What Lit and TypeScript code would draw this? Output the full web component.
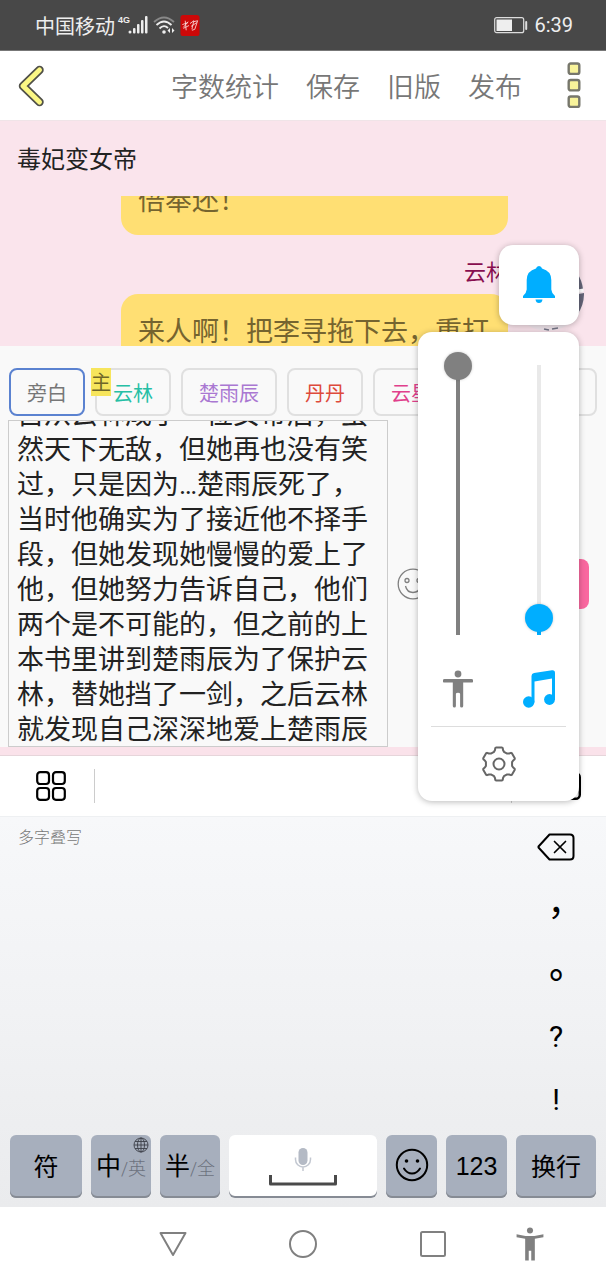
import { LitElement, html, css, svg } from "lit";
import { customElement, property, query } from "lit/decorators.js";
import { classMap } from "lit/directives/class-map.js";

const STORY =
  "自从云林成了一位女帝后，虽然天下无敌，但她再也没有笑过，只是因为…楚雨辰死了，当时他确实为了接近他不择手段，但她发现她慢慢的爱上了他，但她努力告诉自己，他们两个是不可能的，但之前的上本书里讲到楚雨辰为了保护云林，替她挡了一剑，之后云林就发现自己深深地爱上楚雨辰";

const ROLES = [
  { name: "旁白", tone: "grey", active: true, lead: false },
  { name: "云林", tone: "teal", active: false, lead: true },
  { name: "楚雨辰", tone: "purple", active: false, lead: false },
  { name: "丹丹", tone: "red", active: false, lead: false },
  { name: "云星", tone: "pink", active: false, lead: false },
];

/** Outline of a six-toothed cog centred on 18,18. */
function cog(): string {
  const pts: string[] = [];
  for (let i = 0; i < 6; i++) {
    const mid = -90 + i * 60;
    for (const [off, r] of [[-22, 13.2], [-16, 14.6], [-13, 16.4], [-10, 16.8], [10, 16.8], [13, 16.4], [16, 14.6], [22, 13.2]]) {
      const a = ((mid + off) * Math.PI) / 180;
      pts.push(`${(18 + r * Math.cos(a)).toFixed(2)} ${(18 + r * Math.sin(a)).toFixed(2)}`);
    }
  }
  return `M${pts.join("L")}Z`;
}

@customElement("volume-slider")
export class VolumeSlider extends LitElement {
  @property() label = "";
  @property({ type: Number }) value = 0;
  @property({ reflect: true }) tone = "grey";

  static styles = css`
    :host { display: block; --on: #808080; --off: #e9e9e9; }
    :host([tone="blue"]) { --on: #00aeff; }
    input {
      display: block;
      appearance: none;
      -webkit-appearance: none;
      writing-mode: vertical-lr;
      direction: rtl;
      width: 28px;
      height: 296px;
      margin: 0;
      background: linear-gradient(to top, var(--on) var(--fill), var(--off) var(--fill)) center / 4px 270px no-repeat;
    }
    input::-webkit-slider-thumb {
      appearance: none;
      -webkit-appearance: none;
      width: 28px;
      height: 28px;
      border-radius: 50%;
      background: var(--on);
      box-shadow: 0 0 3px rgb(0 0 0 / 20%);
    }
  `;

  render() {
    return html`<input type="range" min="0" max="100" aria-label=${this.label}
      .value=${String(this.value)} style="--fill:${this.value}%" />`;
  }
}

@customElement("app-root")
export class AppRoot extends LitElement {
  @query(".feed") feed!: HTMLElement;
  @query(".story") story!: HTMLTextAreaElement;

  firstUpdated() {
    this.feed.scrollTop = 33;
    this.story.scrollTop = this.story.scrollHeight - this.story.clientHeight - 2;
  }

  static styles = css`
    :host {
      display: flex;
      flex-direction: column;
      position: relative;
      min-height: 100vh;
      overflow: hidden;
      background: #fff;
      font-family: Roboto, "Noto Sans CJK SC", sans-serif;
    }
    * { box-sizing: border-box; }
    button {
      font: inherit;
      color: inherit;
      background: none;
      border: 0;
      padding: 0;
      margin: 0;
      display: flex;
      align-items: center;
      justify-content: center;
    }
    svg { display: block; flex: none; }

    .status {
      display: flex;
      align-items: center;
      height: 51px;
      padding: 0 33px 0 35px;
      background: #484848;
      border-bottom: 1px solid #777;
      color: #eee;
      font-size: 20px;
    }
    .network { margin-left: 3px; width: 10px; align-self: flex-start; padding-top: 14px; font: 700 9px/12px "Liberation Sans", sans-serif; }
    .radio { display: flex; gap: 5px; align-items: center; flex: 1; }
    .status-right { display: flex; gap: 6px; align-items: center; }

    .header {
      display: flex;
      align-items: center;
      height: 70px;
      padding: 0 24px 0 17px;
      border-bottom: 1px solid #f0e4e8;
      color: #777;
      font-size: 27px;
      font-weight: 350;
    }
    .actions { display: flex; flex: 1; justify-content: flex-end; gap: 27px; padding-right: 44px; }

    .title {
      height: 75px;
      margin: 0;
      padding: 2px 17px 0;
      background: #fae4ec;
      color: #222;
      font-size: 24px;
      font-weight: 400;
      line-height: 75px;
    }
    .feed { height: 150px; overflow: hidden; background: #fae4ec; padding: 0 22px 0 121px; }
    .row { display: grid; grid-template-columns: minmax(0, 1fr) 76px; align-items: start; }
    .bubble {
      grid-column: 1;
      padding: 20px 17px 16px;
      margin: 0;
      border-radius: 17px;
      background: #ffdf73;
      color: #75642f;
      font-size: 27px;
      line-height: 36px;
      white-space: nowrap;
    }
    .speaker { grid-column: 1; text-align: right; color: #880e4f; font-size: 22px; line-height: 32px; padding-top: 22px; margin-bottom: 5px; }
    .avatar { grid-column: 2; grid-row: 1 / span 2; margin-top: 23px; margin-left: 3px; }

    .roles { display: flex; gap: 10px; padding: 22px 9px 4px; height: 74px; background: #f9f9f9; font-size: 20px; }
    .role {
      position: relative;
      height: 48px;
      padding: 0 16px;
      border: 2px solid #e0e0e0;
      border-radius: 8px;
      white-space: nowrap;
    }
    .role.active { border-color: #5b82d0; }
    .role.more { flex: 1; }
    .grey { color: #777; }
    .teal { color: #26bfa5; }
    .purple { color: #aa78d2; }
    .red { color: #de4a3c; }
    .pink { color: #e0408c; }
    .lead { position: absolute; left: -6px; top: -2px; width: 20px; height: 28px; background: #f7e55c; color: #6f6628; line-height: 30px; }

    .compose { display: flex; align-items: center; gap: 9px; padding: 0 17px 0 8px; background: #f9f9f9; }
    .story {
      display: block;
      flex: 0 1 380px;
      height: 327px;
      margin: 0;
      padding: 0 8px;
      border: 1px solid #ccc;
      background: transparent;
      color: #222;
      font: 400 27px/35px Roboto, "Noto Sans CJK SC", sans-serif;
      resize: none;
      overflow: hidden;
      outline: 0;
    }
    .send { margin-left: auto; width: 90px; height: 50px; border-radius: 8px; background: #f9689f; }
    .strip { height: 9px; background: #fae2ea; border-bottom: 1px solid #e6d5da; }

    .tools { display: flex; align-items: center; height: 60px; padding: 0 25px 0 36px; background: #fff; }
    .rule { width: 1px; height: 34px; background: #ccc; }
    .tools .rule:first-of-type { margin-left: 28px; }
    .tools .last { margin-left: auto; margin-right: 40px; }

    .keyboard { flex: 1; display: flex; flex-direction: column; border-top: 1px solid #eef0f2; background: linear-gradient(#f7f8fa, #f1f2f4 50%, #eaebed); }
    .pad { display: flex; justify-content: space-between; flex: 1; padding: 0 10px 0 18px; }
    .hint { color: #777; font-size: 16px; line-height: 24px; padding-top: 9px; font-weight: 300; }
    .marks { display: flex; flex-direction: column; width: 80px; color: #000; font-size: 30px; }
    .marks button { height: 63px; padding-bottom: 3px; }
    .wide { font-family: "Noto Sans CJK TC", sans-serif; font-size: 36px; line-height: 54px; }
    .bold { font-weight: 500; }
    .keys { display: grid; grid-template-columns: 72fr 60fr 60fr 148fr 51fr 61fr 80fr; gap: 9px; padding: 3px 10px 9px; }
    .key {
      position: relative;
      height: 63px;
      padding-bottom: 3px;
      border-radius: 6px;
      background: #a7afbd;
      box-shadow: inset 0 -2px #868b94;
      color: #000;
      font-size: 25px;
      white-space: nowrap;
    }
    .digits { font-family: "Liberation Sans", sans-serif; padding-bottom: 0; }
    .space { flex-direction: column; gap: 3px; padding: 0; background: #fff; }
    .pair { align-items: baseline; padding-top: 11px; }
    .alt { color: #6c727d; font-size: 18px; font-weight: 300; }
    .globe { position: absolute; right: 2px; top: 2px; }

    .nav { display: grid; grid-template-columns: 108fr 130fr 130fr 130fr 64fr 44fr; height: 74px; background: #fff; }
    .nav button:first-child { grid-column: 2; }

    .overlay { position: absolute; right: 27px; top: 245px; display: flex; flex-direction: column; align-items: flex-end; gap: 7px; }
    .card { background: #fff; border-radius: 14px; box-shadow: 0 1px 6px rgb(0 0 0 / 28%); }
    .bell { width: 80px; height: 80px; }
    .panel { width: 161px; padding: 20px 13px 0; }
    .channels { display: flex; justify-content: space-between; }
    .channel { display: flex; flex-direction: column; align-items: center; width: 54px; gap: 21px; padding-bottom: 17px; }
    .settings { width: 100%; height: 75px; border-top: 1px solid #ddd; }
  `;

  private person(width: number, height: number, raised: boolean) {
    return svg`<svg width=${width} height=${height} viewBox="0 0 30 38" fill="#808080" aria-hidden="true">
      <circle cx="15" cy="4" r="3.4"/>
      ${raised
        ? svg`<path d="M0 8.2 L10 10h10L30 8.2v3.2L20.400 13V37.500h-4V26.500h-2.800V37.500h-4V13L0 11.400z"/>`
        : svg`<path d="M1.500 9h27a1.600 1.600 0 0 1 0 3.600H20.200V36q0 1.500-1.600 1.500t-1.500-1.500V24q0-1.200-2.100-1.200T12.900 24v12q0 1.500-1.500 1.500T9.800 36V12.600H1.500a1.600 1.600 0 0 1 0-3.600z"/>`}
    </svg>`;
  }

  render() {
    return html`
      <div class="status">
        <span>中国移动</span>
        <span class="network">4G</span>
        <div class="radio">
          <svg width="20" height="20" viewBox="0 0 20 20" fill="#eee" aria-hidden="true">
            <circle cx="2" cy="17" r="1.500"/><rect x="5" y="13" width="2.500" height="5.500" rx="1"/><rect x="9" y="9" width="2.500" height="9.500" rx="1"/><rect x="13" y="5" width="2.500" height="13.500" rx="1"/><rect x="17" y="1" width="2.500" height="17.500" rx="1"/>
          </svg>
          <svg width="22" height="20" viewBox="0 0 22 20" fill="none" stroke="#eee" stroke-width="1.800" aria-hidden="true">
            <path d="M1 7Q11-2 21 7" stroke="#888"/><path d="M3.500 10Q11 3 18.500 10M6.500 13.500Q11 9 15 13"/>
            <circle cx="11" cy="17" r="1.800" fill="#eee" stroke="none"/><path d="M17 13v5l-2.500-2.500zM19 13v5l2.500-2.500z" fill="#eee" stroke="none"/>
          </svg>
          <svg width="20" height="21" viewBox="0 0 20 22" aria-hidden="true">
            <rect width="20" height="22" rx="3" fill="#cc0808"/>
            <path d="M2 10l6-2M5 6l1 10M3 14l6-3M8 7l-5 6M10 9l4-3-2 9M11 12l6-4M14 7l4-1-3 9-3 1" fill="none" stroke="#f8dcdc" stroke-width=".9"/>
          </svg>
        </div>
        <div class="status-right">
          <svg width="34" height="17" viewBox="0 0 34 17" aria-hidden="true">
            <rect x=".7" y=".7" width="29" height="15" rx="2" fill="none" stroke="#ddd" stroke-width="1.200"/><rect x="2.500" y="2.500" width="15.500" height="11.500" fill="#eee"/><rect x="31.200" y="4" width="2" height="9" rx="1" fill="#ddd"/>
          </svg>
          <span>6:39</span>
        </div>
      </div>

      <header class="header">
        <button aria-label="返回">
          <svg width="28" height="42" viewBox="0 0 28 42" fill="none" stroke-linecap="round" stroke-linejoin="round" aria-hidden="true">
            <path d="M22.500 5L6 21l16.500 16" stroke="#505048" stroke-width="8.500"/><path d="M22.500 5L6 21l16.500 16" stroke="#fbf784" stroke-width="5"/>
          </svg>
        </button>
        <div class="actions">
          <button>字数统计</button><button>保存</button><button>旧版</button><button>发布</button>
        </div>
        <button aria-label="更多">
          <svg width="16" height="48" viewBox="0 0 16 48" fill="#f8f39a" stroke="#77776c" stroke-width="2.400" aria-hidden="true">
            <rect x="2.700" y="1.500" width="10.600" height="10.400" rx="2"/><rect x="2.700" y="18" width="10.600" height="10.400" rx="2"/><rect x="2.700" y="34.500" width="10.600" height="10.400" rx="2"/>
          </svg>
        </button>
      </header>

      <h1 class="title">毒妃变女帝</h1>
      <section class="feed">
        <div class="row"><p class="bubble">倍奉还！</p></div>
        <div class="row">
          <div class="speaker">云林</div>
          <svg class="avatar" width="73" height="73" viewBox="0 0 73 73" aria-hidden="true">
            <circle cx="36.500" cy="36.500" r="36.500" fill="#f1e6ed"/>
            <path d="M66 15A36 36 0 0 1 72 31L62 33zM62 37L73 35A36 36 0 0 1 66 57L60 60z" fill="#646578"/>
            <path d="M62 34L72.500 32" stroke="#fff" stroke-width="3"/>
            <path d="M33 71l5 1m3-1l6-1" stroke="#778" stroke-width="1.500"/>
          </svg>
          <p class="bubble">来人啊！把李寻拖下去，重打</p>
        </div>
      </section>

      <nav class="roles">
        ${ROLES.map(
          (r) => html`<button class=${classMap({ role: true, active: r.active, [r.tone]: true })}>
            ${r.lead ? html`<span class="lead">主</span>` : ""}${r.name}
          </button>`
        )}
        <button class="role more" aria-label="添加角色"></button>
      </nav>

      <section class="compose">
        <textarea class="story" aria-label="正文" .value=${STORY}></textarea>
        <button aria-label="表情">
          <svg width="32" height="32" viewBox="0 0 32 32" fill="none" stroke="#808080" stroke-width="1.300" aria-hidden="true">
            <circle cx="16" cy="16" r="14.800"/><circle cx="10" cy="12.500" r="2"/><circle cx="22" cy="12.500" r="2"/><path d="M8.500 18q1.500 6.500 7.500 6.500t7.500-6.500"/>
          </svg>
        </button>
        <button class="send" aria-label="发送"></button>
      </section>
      <div class="strip"></div>

      <div class="tools">
        <button aria-label="工具">
          <svg width="30" height="30" viewBox="0 0 30 30" fill="none" stroke="#000" stroke-width="2.200" aria-hidden="true">
            <rect x="1.200" y="1.200" width="11.800" height="11.800" rx="3"/><rect x="17" y="1.200" width="11.800" height="11.800" rx="3"/><rect x="1.200" y="17" width="11.800" height="11.800" rx="3"/><rect x="17" y="17" width="11.800" height="11.800" rx="3"/>
          </svg>
        </button>
        <span class="rule"></span>
        <span class="rule last"></span>
        <button aria-label="收起键盘">
          <svg width="29" height="28" viewBox="0 0 29 28" fill="none" stroke="#000" stroke-width="2.400" aria-hidden="true"><rect x="1.200" y="1.200" width="26.600" height="25.600" rx="4"/></svg>
        </button>
      </div>

      <section class="keyboard">
        <div class="pad">
          <span class="hint">多字叠写</span>
          <div class="marks">
            <button aria-label="删除">
              <svg width="38" height="28" viewBox="0 0 38 28" fill="none" stroke="#000" stroke-width="2" stroke-linejoin="round" stroke-linecap="round" aria-hidden="true">
                <path d="M12.500 1.500H33q3.500 0 3.500 3.500v18q0 3.500-3.500 3.500H12.500L1.500 14.500v-1z"/><path d="M17.500 8.500l11 11M28.500 8.500l-11 11" stroke-width="1.700"/>
              </svg>
            </button>
            <button class="wide">，</button>
            <button class="wide bold">。</button>
            <button>?</button>
            <button>!</button>
          </div>
        </div>
        <div class="keys">
          <button class="key">符</button>
          <button class="key pair"><span>中</span><span class="alt">/英</span>
            <svg class="globe" width="16" height="16" viewBox="0 0 16 16" fill="none" stroke="#3c4048" stroke-width=".9" aria-hidden="true">
              <circle cx="8" cy="8" r="7"/><ellipse cx="8" cy="8" rx="3.500" ry="7"/><path d="M8 1v14M1 8h14M2 4.500h12M2 11.500h12"/>
            </svg>
          </button>
          <button class="key pair"><span>半</span><span class="alt">/全</span></button>
          <button class="key space" aria-label="空格">
            <svg width="18" height="24" viewBox="0 0 18 24" aria-hidden="true">
              <rect x="4.500" y="0" width="9" height="17" rx="4.500" fill="#b4bac5"/><path d="M1.500 9.500v2a7.500 7.500 0 0 0 15 0v-2M9 19v4" fill="none" stroke="#c3c8d1" stroke-width="1.500"/>
            </svg>
            <svg width="68" height="11" viewBox="0 0 68 11" fill="none" stroke="#4a4a4a" stroke-width="3" stroke-linejoin="round" aria-hidden="true"><path d="M1.500 0v9h65V0"/></svg>
          </button>
          <button class="key" aria-label="表情符号">
            <svg width="34" height="34" viewBox="0 0 34 34" fill="none" stroke="#000" stroke-width="2" stroke-linecap="round" aria-hidden="true">
              <circle cx="17" cy="17" r="15.200"/><path d="M9 20.500q3 5 8 5t8-5"/><circle cx="11.500" cy="13" r="1.800" fill="#000" stroke="none"/><circle cx="22.500" cy="13" r="1.800" fill="#000" stroke="none"/>
            </svg>
          </button>
          <button class="key digits">123</button>
          <button class="key">换行</button>
        </div>
      </section>

      <nav class="nav">
        <button aria-label="返回"><svg width="28" height="26" viewBox="0 0 28 26" fill="none" stroke="#808080" stroke-width="2" stroke-linejoin="round" aria-hidden="true"><path d="M1.500 2h25L14 24z"/></svg></button>
        <button aria-label="主屏幕"><svg width="28" height="28" viewBox="0 0 28 28" fill="none" stroke="#808080" stroke-width="2" aria-hidden="true"><circle cx="14" cy="14" r="13"/></svg></button>
        <button aria-label="最近任务"><svg width="26" height="26" viewBox="0 0 26 26" fill="none" stroke="#808080" stroke-width="2" aria-hidden="true"><rect x="1" y="1" width="24" height="24" rx="1.500"/></svg></button>
        <button aria-label="无障碍">${this.person(28, 34, true)}</button>
      </nav>

      <aside class="overlay">
        <button class="card bell" aria-label="响铃模式">
          <svg width="32" height="38" viewBox="0 0 32 38" fill="#00aeff" aria-hidden="true">
            <path d="M13 2.500Q13.500 0 16 0t3 2.500Q28.300 5 28.300 14v9.500Q28.500 27 32 30v2H0v-2q3.500-3 3.700-6.500V14Q3.700 5 13 2.500zM12.500 33.500h7q-.5 3.500-3.500 3.500t-3.500-3.500z"/>
          </svg>
        </button>
        <div class="card panel">
          <div class="channels">
            <div class="channel">
              <volume-slider label="无障碍音量" value="100"></volume-slider>
              ${this.person(30, 40, false)}
            </div>
            <div class="channel">
              <volume-slider label="媒体音量" value="6" tone="blue"></volume-slider>
              <svg width="34" height="40" viewBox="0 0 34 40" fill="#00aeff" aria-hidden="true">
                <path d="M9.500 7q0-2.500 2.500-3L30 1.200q3-.4 3 2.800v27h-3V9.500L12.500 12.500v21h-3z"/><circle cx="6.700" cy="33" r="5.700"/><circle cx="27.500" cy="30.500" r="5.400"/>
              </svg>
            </div>
          </div>
          <button class="settings" aria-label="设置">
            <svg width="36" height="36" viewBox="0 0 36 36" fill="none" stroke="#666" stroke-width="2" stroke-linejoin="round" aria-hidden="true">
              <path d=${cog()}/><circle cx="18" cy="18" r="5.500"/>
            </svg>
          </button>
        </div>
      </aside>
    `;
  }
}
